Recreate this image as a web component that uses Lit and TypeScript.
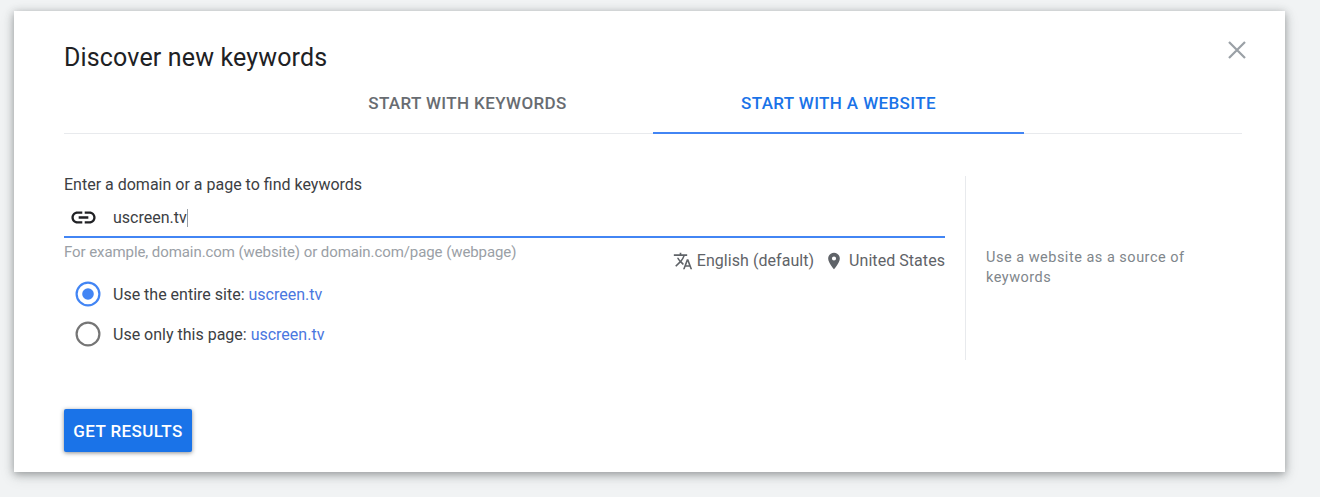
import { LitElement, html, css } from "lit";
import { customElement } from "lit/decorators.js";

@customElement("app-root")
export class AppRoot extends LitElement {
  static styles = css`
    :host { display: block; width: 1320px; height: 497px; background: #f1f3f4; overflow: hidden; font-family: Roboto, "Liberation Sans", sans-serif; padding: 11px 0 0 14px; box-sizing: border-box; }
    .card { width: 1271px; height: 461px; background: #fff; box-sizing: border-box; padding: 30px 43px 0 50px; display: flex; flex-direction: column; position: relative; box-shadow: 0 2px 8px rgba(60,64,67,.45), 0 4px 14px rgba(60,64,67,.15); }
    .close { position: absolute; top: 29px; right: 38px; width: 20px; height: 20px; }
    h1 { margin: 0; font-size: 25px; line-height: 33px; font-weight: 400; color: #202124; letter-spacing: .15px; }
    .tabs { display: flex; justify-content: center; height: 50px; margin-top: 9px; border-bottom: 1px solid #e8eaed; box-sizing: content-box; }
    .tab { width: 371px; display: flex; align-items: center; justify-content: center; font-size: 17px; font-weight: 500; letter-spacing: .38px; color: #686c71; box-sizing: border-box; padding-bottom: 12px; margin-bottom: -1px; }
    .tab.active { color: #1a73e8; border-bottom: 2px solid #4285f4; padding-bottom: 10px; }
    .body { display: flex; margin-top: 42px; height: 184px; }
    .left { width: 881px; flex: none; }
    .label { font-size: 16px; line-height: 18px; color: #3c4043; }
    .input { display: flex; align-items: center; height: 43px; border-bottom: 2px solid #4285f4; box-sizing: border-box; margin-top: 1px; padding-left: 5px; }
    .input svg { width: 29px; height: 29px; flex: none; margin-top: 4px; }
    .value { font-size: 16px; color: #3c4043; margin-left: 15px; padding-top: 3px; }
    .caret { display: inline-block; width: 1px; height: 18px; background: #9aa0a6; vertical-align: -4px; }
    .hintrow { display: flex; justify-content: space-between; }
    .hint { font-size: 15px; line-height: 16px; color: #9aa0a6; margin-top: 6px; letter-spacing: -.08px; }
    .meta { display: flex; align-items: center; margin-top: 13px; font-size: 16px; line-height: 18px; color: #5f6368; letter-spacing: .05px; }
    .meta svg { flex: none; }
    .m1 { width: 20px; height: 20px; margin-right: 4px; }
    .m2 { width: 20px; height: 20px; margin: 0 5px 0 10px; }
    .radios { display: flex; flex-direction: column; gap: 14px; margin-top: 10px; padding-left: 11px; }
    .radio { display: flex; align-items: center; gap: 12px; font-size: 16px; height: 26px; color: #3c4043; }
    .dot { width: 26px; height: 26px; flex: none; }
    a { color: #4a77e0; text-decoration: none; }
    .divider { width: 1px; background: #e8eaed; margin-left: 20px; flex: none; }
    .side { margin-left: 20px; width: 240px; margin-top: 72px; font-size: 14.5px; line-height: 20px; color: #80868b; letter-spacing: .5px; }
    .btn { align-self: flex-start; margin-top: 49px; width: 128px; height: 43px; background: #1a73e8; color: #fff; border: 0; border-radius: 2px; font: 500 17px Roboto, sans-serif; letter-spacing: .4px; box-shadow: 0 1px 4px rgba(60,64,67,.6); padding: 0; }
  `;

  render() {
    return html`
      <div class="card">
        <svg class="close" viewBox="0 0 20 20"><path d="M2 2L18 18M18 2L2 18" stroke="#9aa0a6" stroke-width="2.2" fill="none"/></svg>
        <h1>Discover new keywords</h1>
        <div class="tabs">
          <div class="tab">START WITH KEYWORDS</div>
          <div class="tab active">START WITH A WEBSITE</div>
        </div>
        <div class="body">
          <div class="left">
            <div class="label">Enter a domain or a page to find keywords</div>
            <div class="input">
              <svg viewBox="0 0 24 24"><path fill="#202124" d="M3.9 12c0-1.71 1.39-3.1 3.1-3.1h4V7H7c-2.76 0-5 2.24-5 5s2.24 5 5 5h4v-1.9H7c-1.71 0-3.1-1.39-3.1-3.1zM8 13h8v-2H8v2zm9-6h-4v1.9h4c1.71 0 3.1 1.39 3.1 3.1s-1.39 3.1-3.1 3.1h-4V17h4c2.76 0 5-2.24 5-5s-2.24-5-5-5z"/></svg>
              <div class="value">uscreen.tv<span class="caret"></span></div>
            </div>
            <div class="hintrow">
              <div class="hint">For example, domain.com (website) or domain.com/page (webpage)</div>
              <div class="meta">
                <svg class="m1" viewBox="0 0 24 24"><path fill="#5f6368" d="M12.87 15.07l-2.54-2.51.03-.03c1.74-1.94 2.98-4.17 3.71-6.53H17V4h-7V2H8v2H1v1.99h11.17C11.5 7.92 10.44 9.75 9 11.35 8.07 10.32 7.3 9.19 6.69 8h-2c.73 1.63 1.73 3.17 2.98 4.56l-5.09 5.02L4 19l5-5 3.11 3.11.76-2.04zM18.5 10h-2L12 22h2l1.12-3h4.75L21 22h2l-4.5-12zm-2.62 7l1.62-4.33L19.12 17h-3.24z"/></svg>
                English (default)
                <svg class="m2" viewBox="0 0 24 24"><path fill="#5f6368" d="M12 2C8.13 2 5 5.13 5 9c0 5.25 7 13 7 13s7-7.75 7-13c0-3.87-3.13-7-7-7zm0 9.5a2.5 2.5 0 1 1 0-5 2.5 2.5 0 0 1 0 5z"/></svg>
                United States
              </div>
            </div>
            <div class="radios">
              <div class="radio">
                <svg class="dot" viewBox="0 0 26 26"><circle cx="13" cy="13" r="11.4" fill="none" stroke="#4285f4" stroke-width="2.2"/><circle cx="13" cy="13" r="5.8" fill="#4285f4"/></svg>
                <span>Use the entire site: <a>uscreen.tv</a></span>
              </div>
              <div class="radio">
                <svg class="dot" viewBox="0 0 26 26"><circle cx="13" cy="13" r="11.4" fill="none" stroke="#757575" stroke-width="2.2"/></svg>
                <span>Use only this page: <a>uscreen.tv</a></span>
              </div>
            </div>
          </div>
          <div class="divider"></div>
          <div class="side">Use a website as a source of keywords</div>
        </div>
        <button class="btn">GET RESULTS</button>
      </div>
    `;
  }
}
